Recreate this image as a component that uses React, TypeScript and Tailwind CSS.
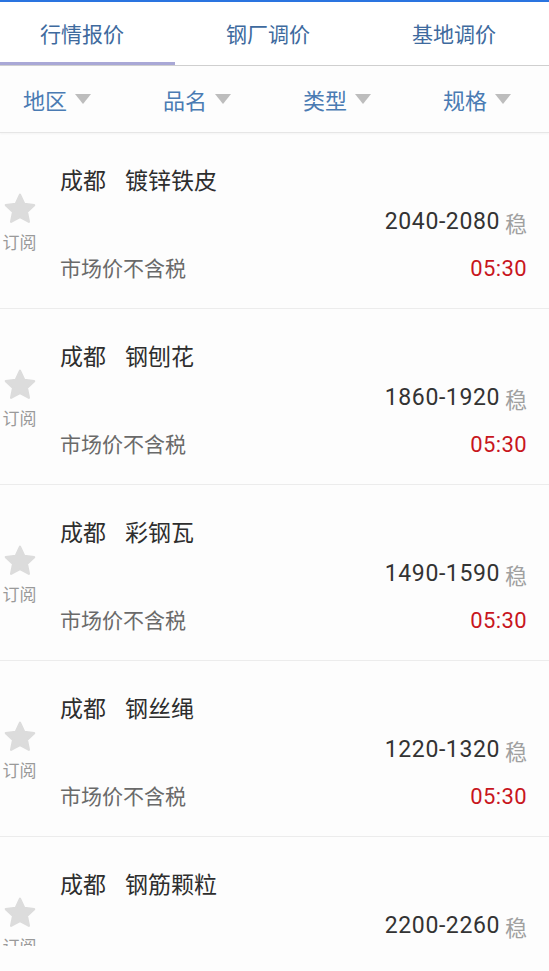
import React from "react";

const items = [
  { city: "成都", name: "镀锌铁皮", price: "2040-2080" },
  { city: "成都", name: "钢刨花", price: "1860-1920" },
  { city: "成都", name: "彩钢瓦", price: "1490-1590" },
  { city: "成都", name: "钢丝绳", price: "1220-1320" },
  { city: "成都", name: "钢筋颗粒", price: "2200-2260" },
];

const filters = ["地区", "品名", "类型", "规格"];

function Star() {
  return (
    <svg width="34" height="32" viewBox="0 0 24 23">
      <path
        d="M12 1.2l3.1 6.6 7.1.9-5.2 4.9 1.4 7.1L12 17.2l-6.4 3.5 1.4-7.1L1.8 8.7l7.1-.9z"
        fill="#dcdcdc"
        stroke="#dcdcdc"
        strokeWidth="1.6"
        strokeLinejoin="round"
      />
    </svg>
  );
}

function Row({ city, name, price }: { city: string; name: string; price: string }) {
  return (
    <div className="flex h-[176px] shrink-0 border-b border-[#ececec]">
      <div className="flex w-[60px] shrink-0 flex-col items-center justify-center pr-[21px] pt-[4px]">
        <Star />
        <span className="mt-[6px] text-[17px] leading-[22px] text-[#9a9a9a]">订阅</span>
      </div>
      <div className="flex flex-1 flex-col pr-[22px] pt-[31px]">
        <div className="flex h-[30px] items-center text-[23px] leading-[30px] text-[#2e2e2e]">
          <span>{city}</span>
          <span className="ml-[19px]">{name}</span>
        </div>
        <div className="mt-[13px] flex h-[30px] items-center justify-end">
          <span className="font-['Roboto'] text-[23px] tracking-[0.6px] text-[#333]">
            {price}
          </span>
          <span className="ml-[5px] text-[22px] text-[#a0a0a0]">稳</span>
        </div>
        <div className="mt-[16px] flex h-[30px] items-center justify-between">
          <span className="text-[21px] text-[#6a6a6a]">市场价不含税</span>
          <span className="font-['Roboto'] text-[22px] tracking-[0.4px] text-[#c8161d]">05:30</span>
        </div>
      </div>
    </div>
  );
}

export default function App() {
  return (
    <div className="h-[971px] w-[549px] overflow-hidden bg-[#fdfdfd] font-['Noto_Sans_CJK_SC',sans-serif]">
      <div className="h-[2px] bg-[#2a74e0]" />
      <div className="flex h-[64px] border-b border-[#cfcfcf] bg-white text-[21px] text-[#3e6a9e]">
        <div className="flex w-[175px] shrink-0 items-center border-b-[3px] border-[#a9a8d6] pl-[40px] pt-[3px]">
          行情报价
        </div>
        <div className="flex shrink-0 items-center pl-[51px]">钢厂调价</div>
        <div className="flex shrink-0 items-center pl-[102px]">基地调价</div>
      </div>
      <div className="flex h-[67px] items-center border-b border-[#e6e6e6] pl-[23px] shadow-[0_1px_2px_rgba(0,0,0,0.04)]">
        {filters.map((f) => (
          <div key={f} className="flex w-[140px] shrink-0 items-center">
            <span className="text-[22px] text-[#4a7bb3]">{f}</span>
            <svg className="ml-[8px]" width="16" height="10" viewBox="0 0 16 10">
              <path d="M0 0h16L8 10z" fill="#bdbdbd" />
            </svg>
          </div>
        ))}
      </div>
      <div className="flex h-[813px] flex-col overflow-hidden">
        {items.map((it) => (
          <Row key={it.name} {...it} />
        ))}
      </div>
    </div>
  );
}
